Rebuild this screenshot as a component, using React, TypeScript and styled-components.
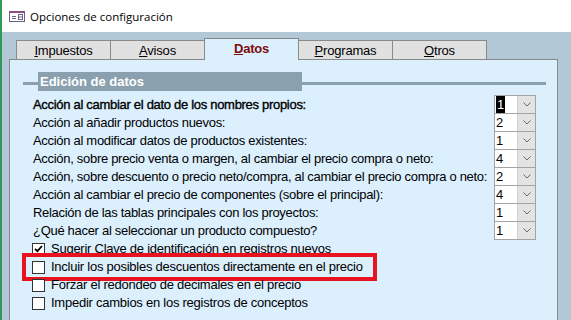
import styled, { createGlobalStyle } from 'styled-components';

const GlobalStyle = createGlobalStyle`
  html, body {
    margin: 0;
    padding: 0;
    background: #ffffff;
  }
  body {
    font-family: "Liberation Sans", Arial, sans-serif;
  }
`;

const PANEL_BG = '#dbeffd';
const EDGE = '#898989';
const BAND = '#8aa0af';

const Window = styled.div`
  width: 571px;
  height: 320px;
  box-sizing: border-box;
  overflow: hidden;
  display: flex;
  flex-direction: column;
  border-left: 2px solid #2f9a5a;
  background: #ffffff;
`;

const TitleBar = styled.div`
  height: 32px;
  flex: none;
  display: flex;
  align-items: center;
  gap: 5px;
  padding-left: 7px;
  font-family: "Open Sans", "Noto Sans", sans-serif;
  font-size: 11.5px;
  color: #000;
`;

const Body = styled.div`
  flex: 1;
  display: flex;
  flex-direction: column;
  background: #b3c8d6;
  padding: 6px 13px 0 7px;
`;

const TabStrip = styled.div`
  display: flex;
  align-items: flex-end;
  height: 22px;
  padding-left: 7px;
  margin-bottom: -1px;
  position: relative;
  z-index: 1;
`;

const Tab = styled.div<{ $active?: boolean }>`
  width: 95px;
  box-sizing: border-box;
  height: ${(p) => (p.$active ? '22px' : '19px')};
  margin-bottom: ${(p) => (p.$active ? '0' : '1px')};
  margin-left: -1px;
  padding-top: 2px;
  border: 1px solid ${EDGE};
  border-bottom: none;
  background: ${(p) => (p.$active ? PANEL_BG : '#e1e1e1')};
  text-align: center;
  font-size: 13px;
  letter-spacing: -0.2px;
  line-height: 15px;
  font-weight: ${(p) => (p.$active ? 700 : 400)};
  color: ${(p) => (p.$active ? '#7d0b0b' : '#000')};

  &:first-child {
    margin-left: 0;
  }
`;

const Panel = styled.div`
  flex: 1;
  background: ${PANEL_BG};
  border: 1px solid ${EDGE};
  border-bottom: none;
  padding: 12px 11px 0 13px;
`;

const GroupHeader = styled.div`
  display: flex;
  align-items: flex-start;
  height: 19px;
`;

const Rule = styled.div<{ $grow?: boolean }>`
  ${(p) => (p.$grow ? 'flex: 1;' : 'width: 15px;')}
  height: 3px;
  margin-top: 10px;
  background: ${BAND};
`;

const GroupTitle = styled.div`
  width: 264px;
  height: 19px;
  box-sizing: border-box;
  padding-left: 2px;
  background: ${BAND};
  color: #ffffff;
  font-size: 13px;
  font-weight: 700;
  line-height: 19px;
`;

const Content = styled.div`
  margin-top: 4px;
  padding: 0 10px;
`;

const SettingsGrid = styled.div`
  display: grid;
  grid-template-columns: 1fr 42px;
  grid-auto-rows: 18px;
  align-items: center;
`;

const Label = styled.div<{ $focused?: boolean }>`
  font-size: 13px;
  letter-spacing: -0.3px;
  color: #000;
  white-space: nowrap;
  ${(p) => (p.$focused ? '-webkit-text-stroke: 0.35px #000;' : '')}
`;

const Combo = styled.div`
  align-self: start;
  height: 19px;
  box-sizing: border-box;
  display: flex;
  border: 1px solid #a3a3a3;
  background: #ffffff;
`;

const ComboValue = styled.div`
  flex: 1;
  display: flex;
  align-items: center;
  padding-left: 1px;
  font-size: 13px;
  color: #000;
`;

const Selected = styled.span`
  background: #000;
  color: #fff;
  padding: 1px 1px 2px;
`;

const ComboButton = styled.div`
  width: 17px;
  display: flex;
  align-items: center;
  justify-content: center;
  border-left: 1px solid #cfcfcf;
  background: #e3e3e3;
`;

const CheckList = styled.div`
  display: flex;
  flex-direction: column;
  margin-left: -1px;
`;

const CheckRow = styled.div<{ $marked?: boolean }>`
  position: relative;
  height: 18px;
  display: flex;
  align-items: center;
  gap: 6px;
  font-size: 13px;
  letter-spacing: -0.25px;
  color: #000;
  white-space: nowrap;

  ${(p) =>
    p.$marked
      ? `&::after {
    content: '';
    position: absolute;
    left: -10px;
    top: -4px;
    width: 355px;
    height: 28px;
    box-sizing: border-box;
    border: 4px solid #e8131f;
  }`
      : ''}
`;

const Box = styled.div`
  width: 13px;
  height: 13px;
  flex: none;
  box-sizing: border-box;
  margin-top: 2px;
  border: 1px solid #333333;
  background: #ffffff;
  display: flex;
  align-items: center;
  justify-content: center;
`;

function FormIcon() {
  return (
    <svg width="16" height="11" viewBox="0 0 16 11">
      <rect x="0.5" y="0.5" width="15" height="10" fill="#fff" stroke="#6e5f86" />
      <rect x="0" y="0" width="16" height="2" fill="#8a4f7e" />
      <path d="M3 5.5h4M3 7.5h4" stroke="#6e5f86" />
      <rect x="9.5" y="3.5" width="4" height="5" fill="#fff" stroke="#6e5f86" />
      <path d="M9.5 6h4" stroke="#6e5f86" />
    </svg>
  );
}

function Chevron() {
  return (
    <svg width="8" height="5" viewBox="0 0 8 5">
      <path d="M0.5 0.5 4 4 7.5 0.5" fill="none" stroke="#6a6a6a" strokeWidth="1" />
    </svg>
  );
}

function Tick() {
  return (
    <svg width="9" height="8" viewBox="0 0 9 8">
      <path d="M1 3.8 3.4 6.2 8 1" fill="none" stroke="#000" strokeWidth="1.8" />
    </svg>
  );
}

const settings = [
  { label: 'Acción al cambiar el dato de los nombres propios:', value: '1', active: true },
  { label: 'Acción al añadir productos nuevos:', value: '2' },
  { label: 'Acción al modificar datos de productos existentes:', value: '1' },
  { label: 'Acción, sobre precio venta o margen, al cambiar el precio compra o neto:', value: '4' },
  { label: 'Acción, sobre descuento o precio neto/compra, al cambiar el precio compra o neto:', value: '2' },
  { label: 'Acción al cambiar el precio de componentes (sobre el principal):', value: '4' },
  { label: 'Relación de las tablas principales con los proyectos:', value: '1' },
  { label: '¿Qué hacer al seleccionar un producto compuesto?', value: '1' },
];

const checks = [
  { label: 'Sugerir Clave de identificación en registros nuevos', checked: true },
  { label: 'Incluir los posibles descuentos directamente en el precio', marked: true },
  { label: 'Forzar el redondeo de decimales en el precio' },
  { label: 'Impedir cambios en los registros de conceptos' },
];

const tabs = [
  { key: 'I', rest: 'mpuestos' },
  { key: 'A', rest: 'visos' },
  { key: 'D', rest: 'atos', active: true },
  { key: 'P', rest: 'rogramas' },
  { key: 'O', rest: 'tros' },
];

export default function App() {
  return (
    <>
      <GlobalStyle />
      <Window>
        <TitleBar>
          <FormIcon />
          <span>Opciones de configuración</span>
        </TitleBar>
        <Body>
          <TabStrip>
            {tabs.map((t) => (
              <Tab key={t.key} $active={t.active}>
                <u>{t.key}</u>
                {t.rest}
              </Tab>
            ))}
          </TabStrip>
          <Panel>
            <GroupHeader>
              <Rule />
              <GroupTitle>Edición de datos</GroupTitle>
              <Rule $grow />
            </GroupHeader>
            <Content>
              <SettingsGrid>
                {settings.map((s) => (
                  <>
                    <Label key={s.label} $focused={s.active}>
                      {s.label}
                    </Label>
                    <Combo key={s.label + '-c'}>
                      <ComboValue>
                        {s.active ? <Selected>{s.value}</Selected> : s.value}
                      </ComboValue>
                      <ComboButton>
                        <Chevron />
                      </ComboButton>
                    </Combo>
                  </>
                ))}
              </SettingsGrid>
              <CheckList>
                {checks.map((c) => (
                  <CheckRow key={c.label} $marked={c.marked}>
                    <Box>{c.checked && <Tick />}</Box>
                    <span>{c.label}</span>
                  </CheckRow>
                ))}
              </CheckList>
            </Content>
          </Panel>
        </Body>
      </Window>
    </>
  );
}
